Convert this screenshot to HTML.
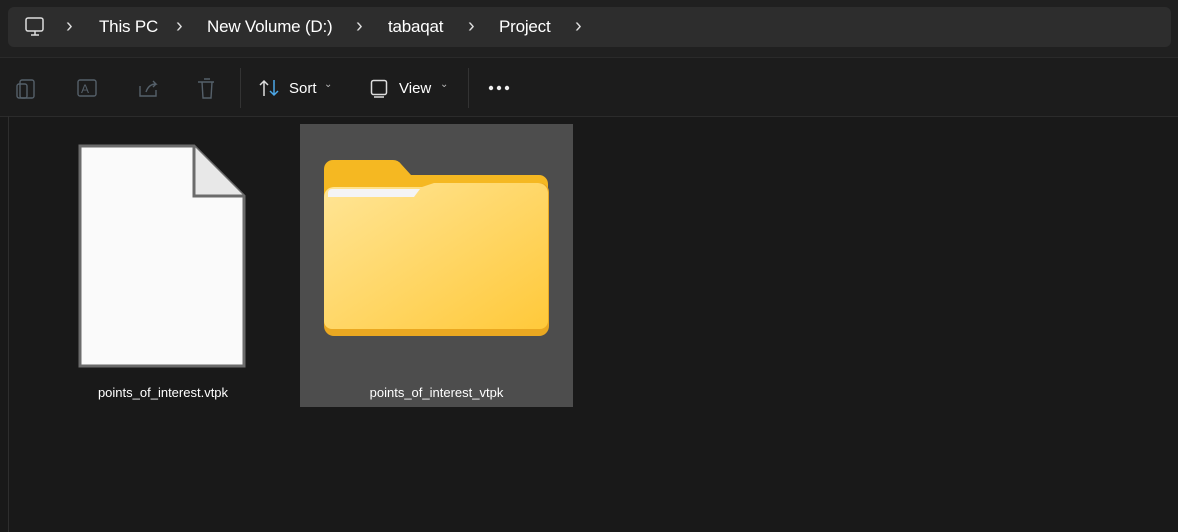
<!DOCTYPE html>
<html><head><style>
body{margin:0;width:1178px;height:532px;background:#191919;font-family:"Liberation Sans",sans-serif;position:relative;overflow:hidden;color:#fff}
.top{position:absolute;left:0;top:0;width:1178px;height:57px;background:#202020}
.bc{position:absolute;left:8px;top:7px;width:1163px;height:40px;background:#2d2d2d;border-radius:6px}
.t{position:absolute;top:17px;font-size:17px;color:#fff;letter-spacing:-0.2px}
.c{position:absolute;top:15px;font-size:20px;color:#ddd}
.tb{position:absolute;left:0;top:57px;width:1178px;height:58px;background:#1c1c1c;border-top:1px solid #2a2a2a;border-bottom:1px solid #2b2b2b}
.lbl{position:absolute;font-size:15px;color:#fff}
.sep{position:absolute;top:68px;width:1px;height:40px;background:#333}
</style></head><body>
<div class="top"><div class="bc"></div></div>
<svg style="position:absolute;left:24px;top:16px" width="22" height="22" viewBox="0 0 22 22" fill="none" stroke="#ddd" stroke-width="1.5"><rect x="2" y="2" width="17" height="13" rx="2"/><path d="M7 19h8M11 15v4"/></svg>
<div class="c" style="left:66px">›</div>
<div class="t" style="left:99px">This PC</div>
<div class="c" style="left:176px">›</div>
<div class="t" style="left:207px">New Volume (D:)</div>
<div class="c" style="left:356px">›</div>
<div class="t" style="left:388px">tabaqat</div>
<div class="c" style="left:468px">›</div>
<div class="t" style="left:499px">Project</div>
<div class="c" style="left:575px">›</div>
<div class="tb"></div>
<svg style="position:absolute;left:16px;top:76px" width="210" height="26" fill="none" stroke="#55606a" stroke-width="1.4">
<rect x="4" y="4" width="14" height="18" rx="2"/><rect x="1" y="8" width="10" height="14" rx="2"/>
<rect x="62" y="4" width="18" height="16" rx="2"/><text x="65" y="17" font-size="12" fill="#55606a" stroke="none" font-family="Liberation Sans">A</text>
<path d="M124 10v10h16v-6M130 16c2-6 6-8 10-8l-3-3M140 8l-3 3"/>
<path d="M182 6h16M186 6l1 16h8l1-16M188 3h6"/></svg>
<div class="sep" style="left:240px"></div>
<svg style="position:absolute;left:259px;top:78px" width="22" height="20" fill="none" stroke-width="1.5"><path d="M5 18V3M1 7l4-4 4 4" stroke="#ddd"/><path d="M15 2v15M11 13l4 4 4-4" stroke="#4ca8e8"/></svg>
<div class="lbl" style="left:289px;top:80px">Sort</div>
<div class="lbl" style="left:324px;top:79px;font-size:10px;color:#bbb">⌄</div>
<svg style="position:absolute;left:370px;top:79px" width="20" height="20" fill="none" stroke="#ddd" stroke-width="1.5"><rect x="1.5" y="1.5" width="15" height="14" rx="2"/><path d="M4 18h10"/></svg>
<div class="lbl" style="left:399px;top:80px">View</div>
<div class="lbl" style="left:440px;top:79px;font-size:10px;color:#bbb">⌄</div>
<div class="sep" style="left:468px"></div>
<svg style="position:absolute;left:488px;top:85px" width="24" height="6" fill="#eee"><circle cx="3" cy="3" r="2.2"/><circle cx="11" cy="3" r="2.2"/><circle cx="19" cy="3" r="2.2"/></svg>
<div style="position:absolute;left:8px;top:116px;width:1px;height:416px;background:#2e2e2e"></div>
<svg style="position:absolute;left:78px;top:144px" width="170" height="224"><path d="M2 2h114l50 50v170H2z" fill="#fafafa" stroke="#6b6b6b" stroke-width="3"/><path d="M116 2v50h50" fill="#e8e8e8" stroke="#6b6b6b" stroke-width="3"/></svg>
<div style="position:absolute;left:60px;top:385px;width:206px;text-align:center;font-size:13px">points_of_interest.vtpk</div>
<div style="position:absolute;left:300px;top:124px;width:273px;height:283px;background:#4d4d4d"></div>
<svg style="position:absolute;left:323px;top:159px" width="226" height="180">
<defs><linearGradient id="g" x1="0" y1="0" x2="1" y2="1"><stop offset="0" stop-color="#ffe596"/><stop offset="1" stop-color="#ffc93a"/></linearGradient></defs>
<path d="M1 10a9 9 0 0 1 9-9h60a10 10 0 0 1 8 4l10 11h128a9 9 0 0 1 9 9v140H1z" fill="#f5b822"/>
<path d="M1 40a10 10 0 0 1 10-10h90l12-6h104a9 9 0 0 1 9 9v134a10 10 0 0 1-10 10H11a10 10 0 0 1-10-10z" fill="#eaa821"/>
<path d="M1 38a10 10 0 0 1 10-10h88l12-4h104a10 10 0 0 1 10 10v128a8 8 0 0 1-8 8H9a8 8 0 0 1-8-8z" fill="url(#g)"/>
<path d="M5 34a4 4 0 0 1 4-4h88l-6 8H5z" fill="#f4f4f6"/>
</svg>
<div style="position:absolute;left:300px;top:385px;width:273px;text-align:center;font-size:13px">points_of_interest_vtpk</div>
</body></html>
